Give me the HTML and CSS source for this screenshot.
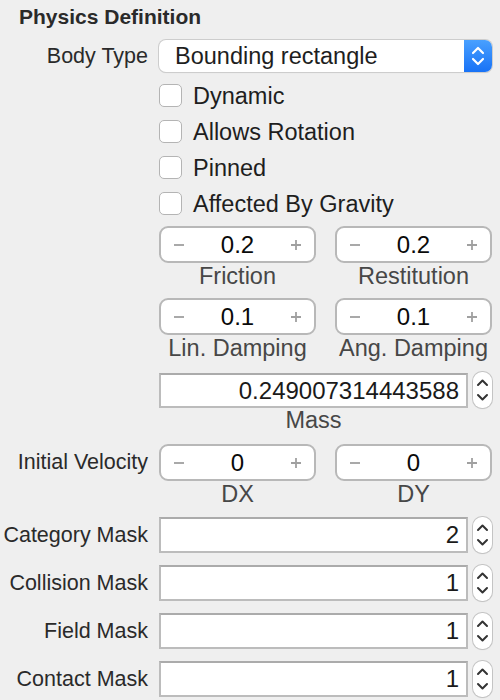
FILE: index.html
```html
<!DOCTYPE html>
<html>
<head>
<meta charset="utf-8">
<link rel="stylesheet" href="styles.css">
</head>
<body>
<div class="panel">
  <div class="title">Physics Definition</div>

  <div class="row popup-row">
    <div class="lbl">Body Type</div>
    <div class="ctl">
      <div class="popup">
        <span class="popup-text">Bounding rectangle</span>
        <span class="popup-btn">
          <svg width="14" height="22" viewBox="0 0 14 22"><path d="M2 8 L7 3 L12 8 M2 14 L7 19 L12 14" fill="none" stroke="#fff" stroke-width="2.2" stroke-linecap="round" stroke-linejoin="round"/></svg>
        </span>
      </div>
    </div>
  </div>

  <div class="checks">
    <div class="row check-row"><div class="lbl"></div><div class="ctl check"><span class="box"></span><span class="check-text">Dynamic</span></div></div>
    <div class="row check-row"><div class="lbl"></div><div class="ctl check"><span class="box"></span><span class="check-text">Allows Rotation</span></div></div>
    <div class="row check-row"><div class="lbl"></div><div class="ctl check"><span class="box"></span><span class="check-text">Pinned</span></div></div>
    <div class="row check-row"><div class="lbl"></div><div class="ctl check"><span class="box"></span><span class="check-text">Affected By Gravity</span></div></div>
  </div>

  <div class="row pair-row first-pair">
    <div class="lbl"></div>
    <div class="ctl pair">
      <div class="cell">
        <div class="stepper"><span class="sgn"><svg width="12" height="12" viewBox="0 0 12 12"><path d="M1 6 H11" stroke="#a0a0a0" stroke-width="1.8"/></svg></span><span class="val">0.2</span><span class="sgn"><svg width="12" height="12" viewBox="0 0 12 12"><path d="M1 6 H11 M6 1 V11" stroke="#a0a0a0" stroke-width="1.8"/></svg></span></div>
        <div class="sub">Friction</div>
      </div>
      <div class="cell">
        <div class="stepper"><span class="sgn"><svg width="12" height="12" viewBox="0 0 12 12"><path d="M1 6 H11" stroke="#a0a0a0" stroke-width="1.8"/></svg></span><span class="val">0.2</span><span class="sgn"><svg width="12" height="12" viewBox="0 0 12 12"><path d="M1 6 H11 M6 1 V11" stroke="#a0a0a0" stroke-width="1.8"/></svg></span></div>
        <div class="sub">Restitution</div>
      </div>
    </div>
  </div>

  <div class="row pair-row">
    <div class="lbl"></div>
    <div class="ctl pair">
      <div class="cell">
        <div class="stepper"><span class="sgn"><svg width="12" height="12" viewBox="0 0 12 12"><path d="M1 6 H11" stroke="#a0a0a0" stroke-width="1.8"/></svg></span><span class="val">0.1</span><span class="sgn"><svg width="12" height="12" viewBox="0 0 12 12"><path d="M1 6 H11 M6 1 V11" stroke="#a0a0a0" stroke-width="1.8"/></svg></span></div>
        <div class="sub">Lin. Damping</div>
      </div>
      <div class="cell">
        <div class="stepper"><span class="sgn"><svg width="12" height="12" viewBox="0 0 12 12"><path d="M1 6 H11" stroke="#a0a0a0" stroke-width="1.8"/></svg></span><span class="val">0.1</span><span class="sgn"><svg width="12" height="12" viewBox="0 0 12 12"><path d="M1 6 H11 M6 1 V11" stroke="#a0a0a0" stroke-width="1.8"/></svg></span></div>
        <div class="sub">Ang. Damping</div>
      </div>
    </div>
  </div>

  <div class="row mass-row">
    <div class="lbl"></div>
    <div class="ctl">
      <div class="field-line">
        <div class="field">0.249007314443588</div>
        <div class="mini"><svg width="19" height="36" viewBox="0 0 19 36"><path d="M5 13 L9.5 8.5 L14 13 M5 23 L9.5 27.5 L14 23" fill="none" stroke="#333" stroke-width="2" stroke-linecap="round" stroke-linejoin="round"/></svg></div>
      </div>
      <div class="sub mass-sub">Mass</div>
    </div>
  </div>

  <div class="row pair-row vel-row">
    <div class="lbl vel-lbl">Initial Velocity</div>
    <div class="ctl pair">
      <div class="cell">
        <div class="stepper"><span class="sgn"><svg width="12" height="12" viewBox="0 0 12 12"><path d="M1 6 H11" stroke="#a0a0a0" stroke-width="1.8"/></svg></span><span class="val">0</span><span class="sgn"><svg width="12" height="12" viewBox="0 0 12 12"><path d="M1 6 H11 M6 1 V11" stroke="#a0a0a0" stroke-width="1.8"/></svg></span></div>
        <div class="sub">DX</div>
      </div>
      <div class="cell">
        <div class="stepper"><span class="sgn"><svg width="12" height="12" viewBox="0 0 12 12"><path d="M1 6 H11" stroke="#a0a0a0" stroke-width="1.8"/></svg></span><span class="val">0</span><span class="sgn"><svg width="12" height="12" viewBox="0 0 12 12"><path d="M1 6 H11 M6 1 V11" stroke="#a0a0a0" stroke-width="1.8"/></svg></span></div>
        <div class="sub">DY</div>
      </div>
    </div>
  </div>

  <div class="masks">
    <div class="row mask-row">
      <div class="lbl">Category Mask</div>
      <div class="ctl field-line">
        <div class="field">2</div>
        <div class="mini"><svg width="19" height="36" viewBox="0 0 19 36"><path d="M5 13 L9.5 8.5 L14 13 M5 23 L9.5 27.5 L14 23" fill="none" stroke="#333" stroke-width="2" stroke-linecap="round" stroke-linejoin="round"/></svg></div>
      </div>
    </div>
    <div class="row mask-row">
      <div class="lbl">Collision Mask</div>
      <div class="ctl field-line">
        <div class="field">1</div>
        <div class="mini"><svg width="19" height="36" viewBox="0 0 19 36"><path d="M5 13 L9.5 8.5 L14 13 M5 23 L9.5 27.5 L14 23" fill="none" stroke="#333" stroke-width="2" stroke-linecap="round" stroke-linejoin="round"/></svg></div>
      </div>
    </div>
    <div class="row mask-row">
      <div class="lbl">Field Mask</div>
      <div class="ctl field-line">
        <div class="field">1</div>
        <div class="mini"><svg width="19" height="36" viewBox="0 0 19 36"><path d="M5 13 L9.5 8.5 L14 13 M5 23 L9.5 27.5 L14 23" fill="none" stroke="#333" stroke-width="2" stroke-linecap="round" stroke-linejoin="round"/></svg></div>
      </div>
    </div>
    <div class="row mask-row">
      <div class="lbl">Contact Mask</div>
      <div class="ctl field-line">
        <div class="field">1</div>
        <div class="mini"><svg width="19" height="36" viewBox="0 0 19 36"><path d="M5 13 L9.5 8.5 L14 13 M5 23 L9.5 27.5 L14 23" fill="none" stroke="#333" stroke-width="2" stroke-linecap="round" stroke-linejoin="round"/></svg></div>
      </div>
    </div>
  </div>
</div>
</body>
</html>
```

FILE: styles.css
```css
html, body {
  margin: 0;
  padding: 0;
  background: #efefef;
}
body {
  width: 500px;
  height: 700px;
  overflow: hidden;
  font-family: "Liberation Sans", Arial, sans-serif;
  color: #2a2a2a;
}
.panel {
  padding: 5px 8px 0 0;
}
.title {
  font-weight: bold;
  font-size: 21px;
  line-height: 24px;
  padding-left: 19px;
  color: #2a2a2a;
}
.row {
  display: flex;
  align-items: center;
}
.lbl {
  width: 148px;
  margin-right: 1px;
  flex: none;
  text-align: right;
  font-size: 21.5px;
  line-height: 24px;
  color: #2a2a2a;
  white-space: nowrap;
}
.ctl {
  margin-left: 10px;
  flex: 1;
  min-width: 0;
}

/* popup */
.popup-row {
  margin-top: 11px;
}
.popup {
  height: 32px;
  box-sizing: border-box;
  display: flex;
  align-items: stretch;
  background: #fff;
  border-radius: 7px;
  box-shadow: 0 0 0 1px #cdcdcd, 0 1px 1px rgba(0,0,0,0.12);
  overflow: hidden;
}
.popup-text {
  flex: 1;
  padding-left: 16px;
  font-size: 23.5px;
  line-height: 32px;
  color: #1e1e1e;
}
.popup-btn {
  width: 28px;
  flex: none;
  display: flex;
  align-items: center;
  justify-content: center;
  background: linear-gradient(#48a0ff, #1872f6);
}

/* checkboxes */
.checks {
  margin-top: 12px;
  display: flex;
  flex-direction: column;
  gap: 13px;
}
.check-row {
  height: 23px;
}
.check {
  display: flex;
  align-items: center;
}
.box {
  width: 23px;
  height: 23px;
  box-sizing: border-box;
  border: 1.5px solid #b4b4b4;
  border-radius: 5px;
  background: #fff;
  flex: none;
}
.check-text {
  margin-left: 11px;
  font-size: 23.5px;
  line-height: 24px;
  color: #1e1e1e;
}

/* steppers */
.pair-row {
  align-items: flex-start;
  margin-top: 10px;
}
.first-pair {
  margin-top: 11px;
}
.pair {
  display: grid;
  grid-template-columns: 1fr 1fr;
  column-gap: 19px;
}
.stepper {
  height: 37px;
  box-sizing: border-box;
  border: 2px solid #b8b8b8;
  border-radius: 9px;
  background: #fff;
  display: flex;
  align-items: center;
  justify-content: space-between;
  padding: 0 12px;
}
.sgn {
  display: flex;
  width: 12px;
  height: 12px;
}
.val {
  font-size: 24px;
  line-height: 30px;
  color: #0a0a0a;
}
.sub {
  text-align: center;
  font-size: 23.5px;
  line-height: 24px;
  color: #474747;
  margin-top: 1px;
}

/* mass */
.mass-row {
  margin-top: 12px;
  align-items: flex-start;
}
.field-line {
  display: flex;
  align-items: center;
}
.field {
  flex: 1;
  height: 35px;
  box-sizing: border-box;
  border: 2px solid #bcbcbc;
  border-top-color: #ababab;
  background: #fff;
  text-align: right;
  padding-right: 7px;
  font-size: 24px;
  line-height: 31px;
  color: #1a1a1a;
}
.mini {
  width: 19px;
  height: 36px;
  margin-left: 5px;
  flex: none;
  box-sizing: border-box;
  background: #fff;
  border-radius: 9px;
  box-shadow: 0 0 0 1px #c4c4c4, 0 1px 1px rgba(0,0,0,0.15);
  display: flex;
}
.mass-sub {
  margin-right: 24px;
  margin-top: 0;
}

/* velocity */
.vel-row {
  margin-top: 12px;
}
.vel-lbl {
  line-height: 36px;
}

/* masks */
.masks {
  margin-top: 11px;
  display: flex;
  flex-direction: column;
  gap: 12px;
}
.mask-row .field {
  height: 36px;
  line-height: 32px;
}
```
